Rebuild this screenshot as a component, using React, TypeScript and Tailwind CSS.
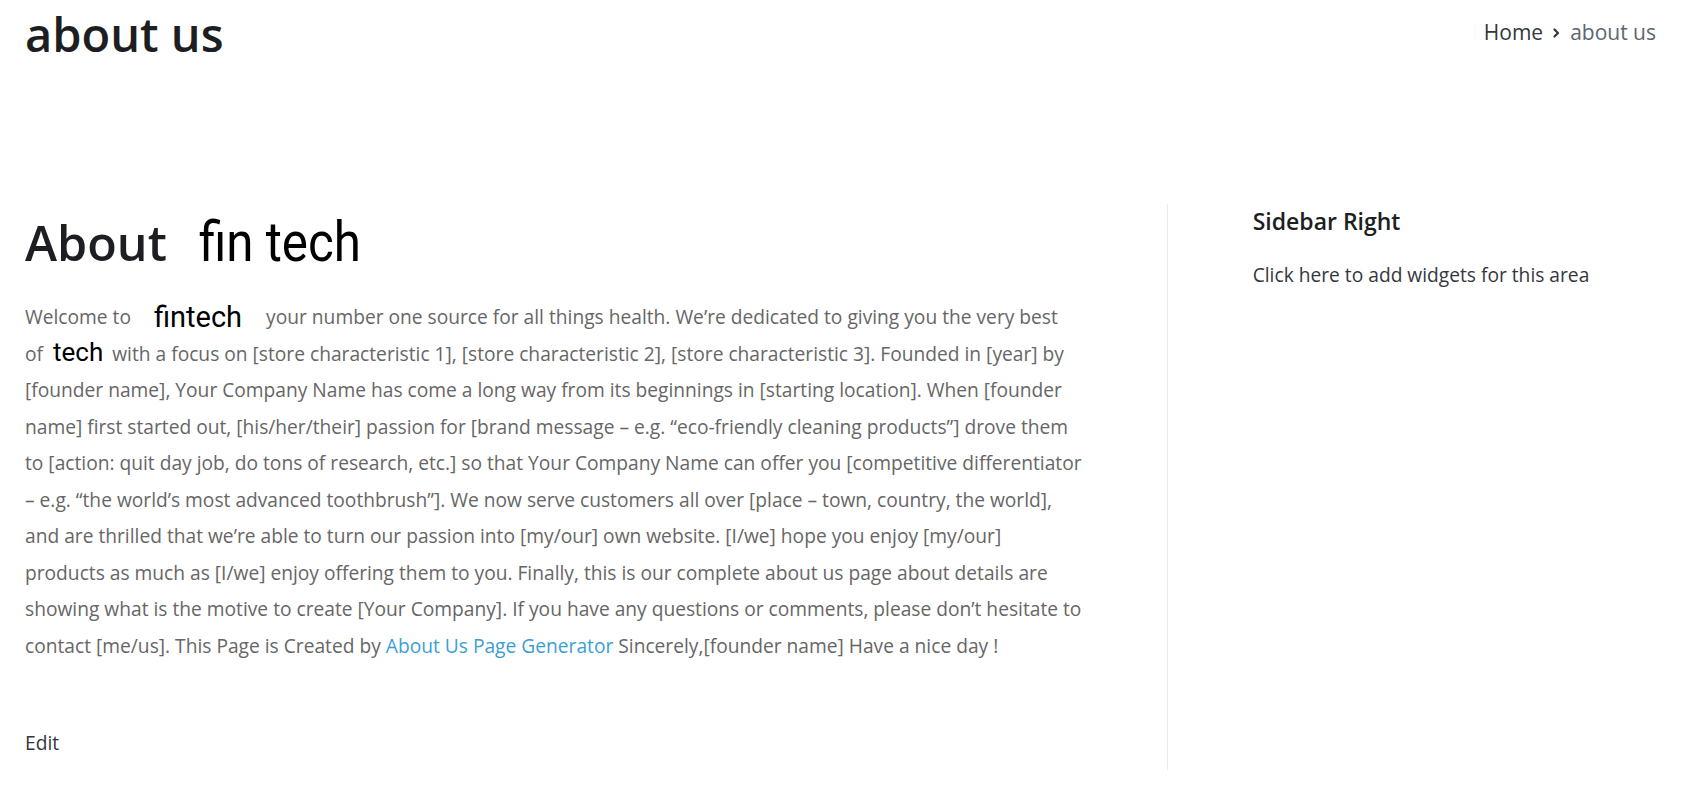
export default function App() {
  return (
    <div className="min-h-screen bg-white px-[25px] font-['Open_Sans',sans-serif]">
      {/* page title + breadcrumb */}
      <div className="flex justify-between items-start">
        <h1 className="mt-[6px] text-[47px] leading-[56px] font-semibold text-[#1c1e22]">about us</h1>
        <nav className="mt-[18px] flex items-center text-[21px] leading-[28px]">
          <span className="text-[#33373d]">Home</span>
          <svg className="mx-[10px] mt-[2px] w-[7px] h-[10px]" viewBox="0 0 7 10" fill="none">
            <path d="M1.5 1.5 5 5 1.5 8.5" stroke="#33373d" strokeWidth={2.2} strokeLinecap="round" strokeLinejoin="round" />
          </svg>
          <span className="text-[#5c6670]">about us</span>
        </nav>
      </div>

      <div className="mt-[142px] flex">
        {/* primary */}
        <div className="w-[70%] pt-[8px] pb-[8px]">
          <h2 className="text-[48.5px] leading-[60px] font-semibold text-[#1c1e22] whitespace-nowrap">
            About
            <span className="ml-[32px] inline-block origin-left scale-x-[0.88] font-['Roboto',sans-serif] font-normal text-[56px] leading-[50px] text-black">
              fin tech
            </span>
          </h2>

          <p className="mt-[27px] text-[19.2px] leading-[36.5px] text-[#666] whitespace-nowrap">
            Welcome to
            <span className="relative top-[3px] ml-[23px] mr-[24px] inline-block font-['Roboto',sans-serif] text-[29px] leading-[28px] text-black">fintech</span>
            your number one source for all things health. We’re dedicated to giving you the very best
            <br />
            of
            <span className="ml-[10px] mr-[9px] inline-block font-['Roboto',sans-serif] text-[26px] leading-[26px] text-black">tech</span>
            with a focus on [store characteristic 1], [store characteristic 2], [store characteristic 3]. Founded in [year] by
            <br />
            [founder name], Your Company Name has come a long way from its beginnings in [starting location]. When [founder
            <br />
            name] first started out, [his/her/their] passion for [brand message – e.g. “eco-friendly cleaning products”] drove them
            <br />
            to [action: quit day job, do tons of research, etc.] so that Your Company Name can offer you [competitive differentiator
            <br />
            – e.g. “the world’s most advanced toothbrush”]. We now serve customers all over [place – town, country, the world],
            <br />
            and are thrilled that we’re able to turn our passion into [my/our] own website. [I/we] hope you enjoy [my/our]
            <br />
            products as much as [I/we] enjoy offering them to you. Finally, this is our complete about us page about details are
            <br />
            showing what is the motive to create [Your Company]. If you have any questions or comments, please don’t hesitate to
            <br />
            contact [me/us]. This Page is Created by{' '}
            <a href="#" className="text-[#3c9fd4]">About Us Page Generator</a> Sincerely,[founder name] Have a nice day !
          </p>

          <a href="#" className="mt-[61px] block text-[19.2px] leading-[36.5px] text-[#33373d]">Edit</a>
        </div>

        {/* sidebar */}
        <aside className="w-[30%] border-l border-[#ebebeb] pl-[85px] pt-[1px]">
          <h3 className="text-[23px] leading-[32px] font-semibold text-[#1c1e22]">Sidebar Right</h3>
          <p className="mt-[24px] text-[19.2px] leading-[28px] text-[#33373d]">Click here to add widgets for this area</p>
        </aside>
      </div>
    </div>
  );
}
